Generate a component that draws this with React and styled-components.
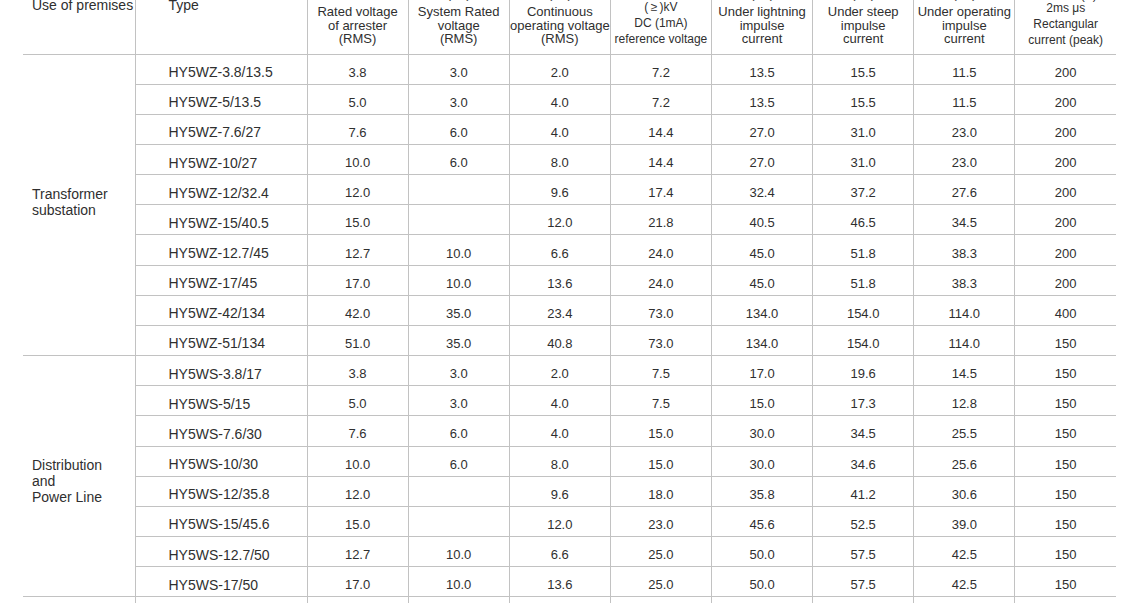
import React from "react";
import styled, { createGlobalStyle } from "styled-components";

const LINE = "#c2c2c2";

const GlobalStyle = createGlobalStyle`
  html, body { margin: 0; padding: 0; background: #ffffff; overflow: hidden; }
  body {
    font-family: "Liberation Sans", Arial, Helvetica, sans-serif;
    color: #2f2f2f;
  }
`;

const Page = styled.div`
  width: 1146px;
  height: 603px;
  overflow: hidden;
`;

const SpecTable = styled.table`
  margin: -26px 0 0 23px;
  width: 1093px;
  table-layout: fixed;
  border-collapse: collapse;
`;

const HeadRow = styled.tr`
  height: 80px;
`;

const HeadCell = styled.th`
  padding: ${(p) => p.$pad};
  font-weight: normal;
  font-size: ${(p) => p.$size}px;
  line-height: ${(p) => p.$lh}px;
  text-align: ${(p) => p.$align || "center"};
  vertical-align: ${(p) => p.$valign || "bottom"};
  border-bottom: 1px solid ${LINE};
  border-right: ${(p) => (p.$last ? "none" : `1px solid ${LINE}`)};
  white-space: nowrap;
`;

const HeadLine = styled.span`
  display: block;
  margin-bottom: ${(p) => p.$gap || 0}px;
`;

const DataRow = styled.tr`
  height: 30.17px;
`;

const GroupCell = styled.td`
  padding: ${(p) => (p.$shift < 0 ? `0 0 ${-2 * p.$shift}px 9px` : `${2 * p.$shift}px 0 0 9px`)};
  font-size: 14px;
  line-height: 16px;
  text-align: left;
  vertical-align: middle;
  border-right: 1px solid ${LINE};
  border-bottom: 1px solid ${LINE};
`;

const TypeCell = styled.td`
  padding: 6px 0 0 33px;
  font-size: 14px;
  text-align: left;
  vertical-align: middle;
  white-space: nowrap;
  border-right: 1px solid ${LINE};
  border-bottom: 1px solid ${LINE};
`;

const ValueCell = styled.td`
  padding: 6px 0 0;
  font-size: 13px;
  text-align: center;
  vertical-align: middle;
  border-right: 1px solid ${LINE};
  border-bottom: 1px solid ${LINE};
  &:last-child {
    border-right: none;
  }
`;

const valueWidth = 809 / 8;

const headers = [
  { lines: ["Rated voltage", "of arrester", "(RMS)"], size: 13, lh: 13.5, pb: 8 },
  { unit: "(kV)", gap: 5, lines: ["System Rated", "voltage", "(RMS)"], size: 13, lh: 13.5, pb: 8 },
  { unit: "(kV)", gap: 5, lines: ["Continuous", "operating voltage", "(RMS)"], size: 13, lh: 13.5, pb: 8 },
  { lines: ["(\u2009\u2265\u2009)kV", "DC (1mA)", "reference voltage"], size: 12, lh: 16, pb: 7 },
  { unit: "(kV)", gap: 5, lines: ["Under lightning", "impulse", "current"], size: 13, lh: 13.5, pb: 8 },
  { unit: "(kV)", gap: 5, lines: ["Under steep", "impulse", "current"], size: 13, lh: 13.5, pb: 8 },
  { unit: "(kV)", gap: 5, lines: ["Under operating", "impulse", "current"], size: 13, lh: 13.5, pb: 8 },
  { unit: "1.2/2ms (A)", gap: -3, lines: ["2ms \u03bcs", "Rectangular", "current (peak)"], size: 12, lh: 16, pb: 6 },
];

const groups = [
  {
    name: ["Transformer", "substation"],
    shift: -3,
    rows: [
      ["HY5WZ-3.8/13.5", "3.8", "3.0", "2.0", "7.2", "13.5", "15.5", "11.5", "200"],
      ["HY5WZ-5/13.5", "5.0", "3.0", "4.0", "7.2", "13.5", "15.5", "11.5", "200"],
      ["HY5WZ-7.6/27", "7.6", "6.0", "4.0", "14.4", "27.0", "31.0", "23.0", "200"],
      ["HY5WZ-10/27", "10.0", "6.0", "8.0", "14.4", "27.0", "31.0", "23.0", "200"],
      ["HY5WZ-12/32.4", "12.0", "", "9.6", "17.4", "32.4", "37.2", "27.6", "200"],
      ["HY5WZ-15/40.5", "15.0", "", "12.0", "21.8", "40.5", "46.5", "34.5", "200"],
      ["HY5WZ-12.7/45", "12.7", "10.0", "6.6", "24.0", "45.0", "51.8", "38.3", "200"],
      ["HY5WZ-17/45", "17.0", "10.0", "13.6", "24.0", "45.0", "51.8", "38.3", "200"],
      ["HY5WZ-42/134", "42.0", "35.0", "23.4", "73.0", "134.0", "154.0", "114.0", "400"],
      ["HY5WZ-51/134", "51.0", "35.0", "40.8", "73.0", "134.0", "154.0", "114.0", "150"],
    ],
  },
  {
    name: ["Distribution", "and", "Power Line"],
    shift: 5,
    rows: [
      ["HY5WS-3.8/17", "3.8", "3.0", "2.0", "7.5", "17.0", "19.6", "14.5", "150"],
      ["HY5WS-5/15", "5.0", "3.0", "4.0", "7.5", "15.0", "17.3", "12.8", "150"],
      ["HY5WS-7.6/30", "7.6", "6.0", "4.0", "15.0", "30.0", "34.5", "25.5", "150"],
      ["HY5WS-10/30", "10.0", "6.0", "8.0", "15.0", "30.0", "34.6", "25.6", "150"],
      ["HY5WS-12/35.8", "12.0", "", "9.6", "18.0", "35.8", "41.2", "30.6", "150"],
      ["HY5WS-15/45.6", "15.0", "", "12.0", "23.0", "45.6", "52.5", "39.0", "150"],
      ["HY5WS-12.7/50", "12.7", "10.0", "6.6", "25.0", "50.0", "57.5", "42.5", "150"],
      ["HY5WS-17/50", "17.0", "10.0", "13.6", "25.0", "50.0", "57.5", "42.5", "150"],
    ],
  },
  {
    name: [""],
    shift: 0,
    rows: [["", "", "", "", "", "", "", "", ""]],
  },
];

export default function App() {
  return (
    <Page>
      <GlobalStyle />
      <SpecTable>
        <colgroup>
          <col style={{ width: 112 }} />
          <col style={{ width: 172 }} />
          {headers.map((_, i) => (
            <col key={i} style={{ width: valueWidth }} />
          ))}
        </colgroup>
        <thead>
          <HeadRow>
            <HeadCell $size={14} $lh={16} $align="left" $valign="top" $pad="23px 0 0 9px">
              Use of premises
            </HeadCell>
            <HeadCell $size={14} $lh={16} $align="left" $valign="top" $pad="23px 0 0 33px">
              Type
            </HeadCell>
            {headers.map((h, i) => (
              <HeadCell
                key={i}
                $size={h.size}
                $lh={h.lh}
                $pad={`0 0 ${h.pb}px`}
                $last={i === headers.length - 1}
              >
                {h.unit && <HeadLine $gap={h.gap}>{h.unit}</HeadLine>}
                {h.lines.map((l) => (
                  <HeadLine key={l}>{l}</HeadLine>
                ))}
              </HeadCell>
            ))}
          </HeadRow>
        </thead>
        <tbody>
          {groups.map((g, gi) =>
            g.rows.map((r, ri) => (
              <DataRow key={`${gi}-${ri}`}>
                {ri === 0 && (
                  <GroupCell rowSpan={g.rows.length} $shift={g.shift}>
                    {g.name.map((n, ni) => (
                      <React.Fragment key={ni}>
                        {ni > 0 && <br />}
                        {n}
                      </React.Fragment>
                    ))}
                  </GroupCell>
                )}
                <TypeCell>{r[0]}</TypeCell>
                {r.slice(1).map((v, vi) => (
                  <ValueCell key={vi}>{v}</ValueCell>
                ))}
              </DataRow>
            ))
          )}
        </tbody>
      </SpecTable>
    </Page>
  );
}
